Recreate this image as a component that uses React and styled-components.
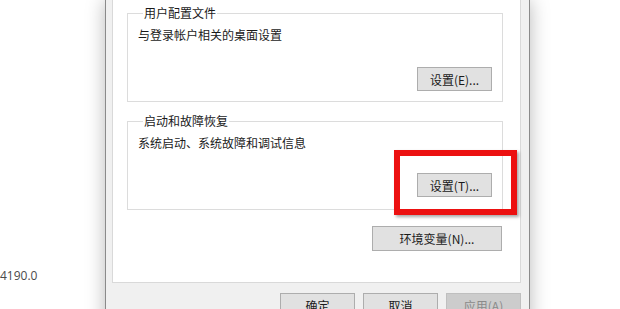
import React from "react";
import styled, { createGlobalStyle } from "styled-components";

const GlobalStyle = createGlobalStyle`
  html, body {
    margin: 0;
    padding: 0;
    background: #ffffff;
    overflow: hidden;
  }
  body {
    font-family: "Noto Sans CJK SC", "Liberation Sans", sans-serif;
    font-size: 12px;
    color: #000;
  }
`;

const Desktop = styled.div`
  position: relative;
  width: 620px;
  height: 309px;
  display: flex;
  overflow: hidden;
  background: #ffffff;
`;

const Side = styled.div`
  width: 105px;
  flex-shrink: 0;
  display: flex;
  flex-direction: column;
  justify-content: flex-end;
  padding-bottom: 25px;
  box-sizing: border-box;
`;

const Version = styled.span`
  font-family: "Open Sans", "Liberation Sans", sans-serif;
  font-size: 12px;
  color: #4a4a4a;
  line-height: 16px;
`;

const Window = styled.div`
  width: 425px;
  height: 340px;
  box-sizing: border-box;
  flex-shrink: 0;
  background: #f0f0f0;
  border-left: 1px solid #8a8a8a;
  border-right: 1px solid #8a8a8a;
  padding: 0 8px 0 6px;
  display: flex;
  flex-direction: column;
  box-shadow: 0 0 18px rgba(0, 0, 0, 0.28);
`;

const Panel = styled.div`
  width: 409px;
  height: 283px;
  box-sizing: border-box;
  background: #ffffff;
  border: 1px solid #d9d9d9;
  border-top: none;
  padding: 5px 17px 0 14px;
  display: flex;
  flex-direction: column;
  align-items: stretch;
`;

const Group = styled.fieldset`
  margin: 0 0 ${(p) => p.$gap || 0}px 0;
  padding: 6px 10px 11px 10px;
  min-width: 0;
  height: 97px;
  box-sizing: border-box;
  border: 1px solid #dcdcdc;
  display: flex;
  flex-direction: column;
`;

const Legend = styled.legend`
  padding: 0 1px;
  margin-left: 5px;
  line-height: 16px;
  font-size: 12px;
  color: #1a1a1a;
`;

const Description = styled.div`
  line-height: 16px;
  color: #1a1a1a;
`;

const Button = styled.button`
  width: ${(p) => p.$width || 75}px;
  height: ${(p) => p.$height || 24}px;
  box-sizing: border-box;
  margin: 0;
  padding: 0;
  font-family: "Noto Sans CJK SC", "Liberation Sans", sans-serif;
  font-size: 12px;
  color: ${(p) => (p.disabled ? "#8a8a8a" : "#1a1a1a")};
  background: ${(p) => (p.disabled ? "#cccccc" : "#e1e1e1")};
  border: 1px solid ${(p) => (p.disabled ? "#bfbfbf" : "#adadad")};
  border-radius: 0;
  cursor: default;
`;

const ButtonRow = styled.div`
  display: flex;
  justify-content: flex-end;
  gap: ${(p) => p.$gap || 0}px;
  margin-top: ${(p) => p.$top || 0}px;
  padding-right: ${(p) => p.$right || 0}px;
  flex-shrink: 0;
`;

const Highlight = styled.div`
  position: absolute;
  left: 394px;
  top: 150px;
  width: 123px;
  height: 65px;
  box-sizing: border-box;
  border: 6px solid #ec1111;
  box-shadow: 2px 2px 3px rgba(0, 0, 0, 0.35);
  pointer-events: none;
`;

export default function App() {
  return (
    <>
      <GlobalStyle />
      <Desktop>
        <Side>
          <Version>4190.0</Version>
        </Side>
        <Window>
          <Panel>
            <Group $gap={11}>
              <Legend>用户配置文件</Legend>
              <Description>与登录帐户相关的桌面设置</Description>
              <ButtonRow $top={24}>
                <Button>设置(E)...</Button>
              </ButtonRow>
            </Group>
            <Group $gap={16}>
              <Legend>启动和故障恢复</Legend>
              <Description>系统启动、系统故障和调试信息</Description>
              <ButtonRow $top={22}>
                <Button>设置(T)...</Button>
              </ButtonRow>
            </Group>
            <ButtonRow $right={1}>
              <Button $width={130} $height={25}>
                环境变量(N)...
              </Button>
            </ButtonRow>
          </Panel>
          <ButtonRow $top={10} $gap={8}>
            <Button>确定</Button>
            <Button>取消</Button>
            <Button disabled>应用(A)</Button>
          </ButtonRow>
        </Window>
        <Highlight />
      </Desktop>
    </>
  );
}
